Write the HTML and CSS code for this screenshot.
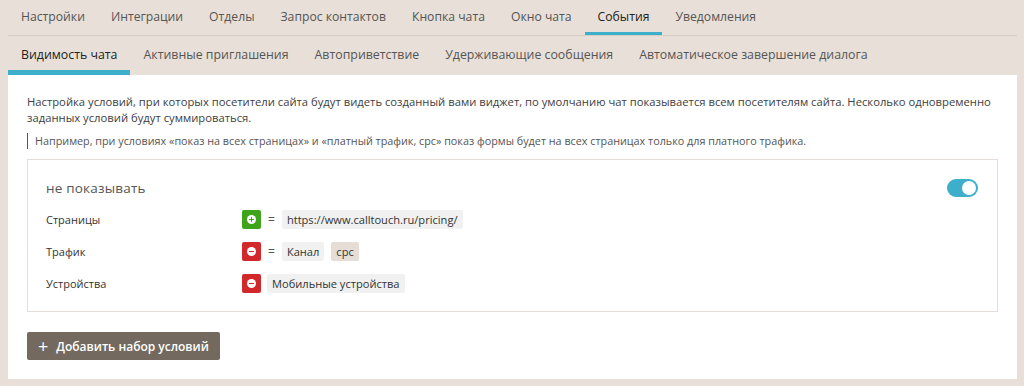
FILE: index.html
```html
<!DOCTYPE html>
<html lang="ru">
<head>
	<meta charset="UTF-8">
	<title>Видимость чата</title>
	<link rel="stylesheet" href="styles.css">
</head>
<body>
	<div class="page">
		<nav class="tabs">
			<a class="tab">Настройки</a>
			<a class="tab">Интеграции</a>
			<a class="tab">Отделы</a>
			<a class="tab">Запрос контактов</a>
			<a class="tab">Кнопка чата</a>
			<a class="tab">Окно чата</a>
			<a class="tab active">События</a>
			<a class="tab">Уведомления</a>
		</nav>
		<nav class="subtabs">
			<a class="tab active">Видимость чата</a>
			<a class="tab">Активные приглашения</a>
			<a class="tab">Автоприветствие</a>
			<a class="tab">Удерживающие сообщения</a>
			<a class="tab">Автоматическое завершение диалога</a>
		</nav>

		<div class="panel">
			<p class="intro">Настройка условий, при которых посетители сайта будут видеть созданный вами виджет, по умолчанию чат показывается всем посетителям сайта. Несколько одновременно заданных условий будут суммироваться.</p>
			<p class="note">Например, при условиях «показ на всех страницах» и «платный трафик, cpc» показ формы будет на всех страницах только для платного трафика.</p>

			<div class="ruleset">
				<div class="ruleset-head">
					<span class="ruleset-title">не показывать</span>
					<label class="switch"><input type="checkbox" checked><span></span></label>
				</div>

				<div class="rule">
					<span class="rule-name">Страницы</span>
					<span class="sign plus"></span>
					<span class="eq">=</span>
					<span class="chip">https://www.calltouch.ru/pricing/</span>
				</div>
				<div class="rule">
					<span class="rule-name">Трафик</span>
					<span class="sign minus"></span>
					<span class="eq">=</span>
					<span class="chip">Канал</span>
					<span class="chip beige">cpc</span>
				</div>
				<div class="rule">
					<span class="rule-name">Устройства</span>
					<span class="sign minus"></span>
					<span class="chip">Мобильные устройства</span>
				</div>
			</div>

			<button class="add-btn"><span class="add-plus">+</span>Добавить набор условий</button>
		</div>
	</div>
</body>
</html>
```

FILE: styles.css
```css
html {
	font-family: "Open Sans", sans-serif;
}
body {
	margin: 0;
	background: #e8e0d8;
	color: #333;
}
.page {
	padding: 0 7px 7px 8px;
}

/* top navigation */
.tabs, .subtabs {
	display: flex;
	font-size: 12.2px;
}
.subtabs { font-size: 12.35px; }
.tabs {
	border-bottom: solid 1px #d5ccc2;
}
.tab {
	padding: 0 13px;
	color: #555;
	cursor: pointer;
	white-space: nowrap;
}
.tabs .tab {
	height: 35px;
	line-height: 34px;
}
.subtabs .tab {
	height: 39px;
	line-height: 37px;
}
.tab.active { color: #222; }
.tabs .tab.active { box-shadow: inset 0 -3px #3eafca; }
.subtabs .tab.active { box-shadow: inset 0 -5px #3eafca; }

/* content */
.panel {
	background: #fff;
	padding: 19px;
}
.intro, .note {
	margin: 0;
	font-size: 11.25px;
	line-height: 16px;
	color: #3d3d3d;
}
.intro { margin-right: -6px; }
.note {
	margin-top: 7px;
	padding-left: 7px;
	border-left: solid 1px #555;
	font-size: 10.8px;
	color: #555;
}

.ruleset {
	margin-top: 10px;
	border: solid 1px #e6ded6;
	padding: 19px 19px 18px 18px;
}
.ruleset-head {
	display: flex;
	align-items: center;
	justify-content: space-between;
	height: 18px;
	margin-bottom: 12px;
}
.ruleset-title {
	font-size: 13.5px;
	color: #555;
	letter-spacing: 0.2px;
}

.switch { position: relative; width: 31px; height: 18px; }
.switch input { position: absolute; opacity: 0; margin: 0; }
.switch span {
	display: block;
	width: 31px;
	height: 18px;
	border-radius: 9px;
	background: #ccc;
	position: relative;
}
.switch input:checked + span { background: #3eafca; }
.switch span::after {
	content: "";
	position: absolute;
	top: 2px;
	left: 2px;
	width: 14px;
	height: 14px;
	border-radius: 50%;
	background: #fff;
}
.switch input:checked + span::after { left: 15px; }

.rule {
	display: flex;
	align-items: center;
	height: 20px;
	margin-bottom: 12px;
	font-size: 11px;
}
.rule:last-child { margin-bottom: 0; }
.rule-name {
	width: 196px;
	color: #333;
}
.sign {
	width: 19px;
	height: 19px;
	border-radius: 2px;
	position: relative;
	margin-right: 6px;
}
.sign.plus { background: #3fa31c; }
.sign.minus { background: #d1282b; }
.sign::before {
	content: "";
	position: absolute;
	left: 5px;
	top: 5px;
	width: 9px;
	height: 9px;
	border-radius: 50%;
	background: #fff;
}
.sign::after {
	content: "";
	position: absolute;
	left: 7px;
	top: 9px;
	width: 5px;
	height: 1px;
	background: #d1282b;
}
.sign.plus::after {
	background: linear-gradient(#3fa31c, #3fa31c) center / 5px 1px no-repeat,
		linear-gradient(#3fa31c, #3fa31c) center / 1px 5px no-repeat;
	top: 7px;
	height: 5px;
}
.eq {
	color: #555;
	margin: 0 7px 0 1px;
	font-size: 12px;
}
.chip {
	display: inline-block;
	height: 19px;
	line-height: 19px;
	padding: 0 5px;
	margin-right: 7px;
	background: #f0f1f0;
	font-size: 11.1px;
	color: #333;
	border-radius: 2px;
}
.chip.beige { background: #e6ded6; }

.add-btn {
	margin-top: 20px;
	height: 28px;
	padding: 0 11px;
	border: 0;
	border-radius: 2px;
	background: #73695e;
	color: #fff;
	font-family: inherit;
	font-size: 12px;
	font-weight: 600;
	cursor: pointer;
}
.add-plus {
	font-size: 18px;
	font-weight: 400;
	margin-right: 8px;
	vertical-align: -2px;
}
```
